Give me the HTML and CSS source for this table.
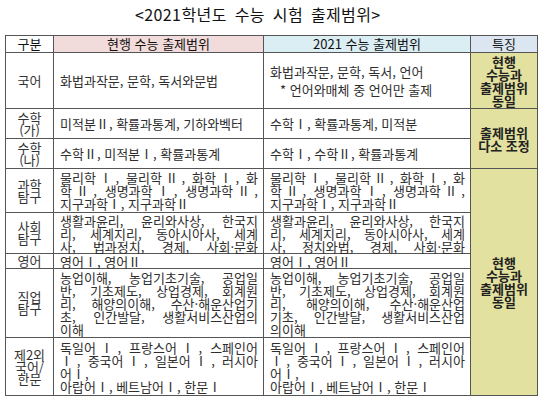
FILE: index.html
```html
<!DOCTYPE html>
<html lang="ko">
<head>
<meta charset="utf-8">
<link rel="stylesheet" href="styles.css">
</head>
<body>
<div class="title">&lt;2021학년도 수능 시험 출제범위&gt;</div>
<table class="grid">
  <colgroup>
    <col class="c1"><col class="c2"><col class="c3"><col class="c4">
  </colgroup>
  <tr class="r-head">
    <th class="h-gubun">구분</th>
    <th class="h-cur">현행 수능 출제범위</th>
    <th class="h-new">2021 수능 출제범위</th>
    <th class="h-feat">특징</th>
  </tr>
  <tr class="r-kor">
    <td class="lbl">국어</td>
    <td class="txt">화법과작문, 문학, 독서와문법</td>
    <td class="txt"><span class="ln">화법과작문, 문학, 독서, 언어</span><span class="ln note">* 언어와매체 중 언어만 출제</span></td>
    <td class="feat">현행<br>수능과<br>출제범위<br>동일</td>
  </tr>
  <tr class="r-m1">
    <td class="lbl">수학<br>(가)</td>
    <td class="txt">미적분Ⅱ, 확률과통계, 기하와벡터</td>
    <td class="txt">수학Ⅰ, 확률과통계, 미적분</td>
    <td class="feat" rowspan="2">출제범위<br>다소 조정</td>
  </tr>
  <tr class="r-m2">
    <td class="lbl">수학<br>(나)</td>
    <td class="txt">수학Ⅱ, 미적분Ⅰ, 확률과통계</td>
    <td class="txt">수학Ⅰ, 수학Ⅱ, 확률과통계</td>
  </tr>
  <tr class="r-sci">
    <td class="lbl">과학<br>탐구</td>
    <td class="txt"><span class="ln j">물리학Ⅰ, 물리학Ⅱ, 화학Ⅰ, 화</span><span class="ln j">학Ⅱ, 생명과학Ⅰ, 생명과학Ⅱ,</span><span class="ln">지구과학Ⅰ, 지구과학Ⅱ</span></td>
    <td class="txt"><span class="ln j">물리학Ⅰ, 물리학Ⅱ, 화학Ⅰ, 화</span><span class="ln j">학Ⅱ, 생명과학Ⅰ, 생명과학Ⅱ,</span><span class="ln">지구과학Ⅰ, 지구과학Ⅱ</span></td>
    <td class="feat" rowspan="5">현행<br>수능과<br>출제범위<br>동일</td>
  </tr>
  <tr class="r-soc">
    <td class="lbl">사회<br>탐구</td>
    <td class="txt"><span class="ln j">생활과윤리, 윤리와사상, 한국지</span><span class="ln j">리, 세계지리, 동아시아사, 세계</span><span class="ln j">사, 법과정치, 경제, 사회·문화</span></td>
    <td class="txt"><span class="ln j">생활과윤리, 윤리와사상, 한국지</span><span class="ln j">리, 세계지리, 동아시아사, 세계</span><span class="ln j">사, 정치와법, 경제, 사회·문화</span></td>
  </tr>
  <tr class="r-eng">
    <td class="lbl">영어</td>
    <td class="txt">영어Ⅰ, 영어Ⅱ</td>
    <td class="txt">영어Ⅰ, 영어Ⅱ</td>
  </tr>
  <tr class="r-job">
    <td class="lbl">직업<br>탐구</td>
    <td class="txt"><span class="ln j">농업이해, 농업기초기술, 공업일</span><span class="ln j">반, 기초제도, 상업경제, 회계원</span><span class="ln j">리, 해양의이해, 수산·해운산업기</span><span class="ln j">초, 인간발달, 생활서비스산업의</span><span class="ln">이해</span></td>
    <td class="txt"><span class="ln j">농업이해, 농업기초기술, 공업일</span><span class="ln j">반, 기초제도, 상업경제, 회계원</span><span class="ln j">리, 해양의이해, 수산·해운산업</span><span class="ln j">기초, 인간발달, 생활서비스산업</span><span class="ln">의이해</span></td>
  </tr>
  <tr class="r-lang">
    <td class="lbl">제2외<br>국어/<br>한문</td>
    <td class="txt"><span class="ln j">독일어Ⅰ, 프랑스어Ⅰ, 스페인어</span><span class="ln j">Ⅰ, 중국어Ⅰ, 일본어Ⅰ, 러시아</span><span class="ln">어Ⅰ,</span><span class="ln">아랍어Ⅰ, 베트남어Ⅰ, 한문Ⅰ</span></td>
    <td class="txt"><span class="ln j">독일어Ⅰ, 프랑스어Ⅰ, 스페인어</span><span class="ln j">Ⅰ, 중국어Ⅰ, 일본어Ⅰ, 러시아</span><span class="ln">어Ⅰ,</span><span class="ln">아랍어Ⅰ, 베트남어Ⅰ, 한문Ⅰ</span></td>
  </tr>
</table>
</body>
</html>
```

FILE: styles.css
```css
html, body {
  margin: 0;
  padding: 0;
  background: #ffffff;
}

body {
  font-family: "Noto Sans CJK KR", "Noto Sans", sans-serif;
  color: #222222;
  width: 550px;
  height: 405px;
  overflow: hidden;
}

.title {
  height: 35px;
  box-sizing: border-box;
  padding: 4px 0 0 135px;
  font-size: 16px;
  line-height: 20px;
  color: #111111;
  letter-spacing: 0.4px;
  word-spacing: 3px;
}

.grid {
  margin-left: 5px;
  width: 532px;
  table-layout: fixed;
  border-collapse: collapse;
  font-size: 13px;
  line-height: 13px;
}

.c1 { width: 48px; }
.c2 { width: 210px; }
.c3 { width: 207px; }
.c4 { width: 67px; }

.grid th,
.grid td {
  border: 1px solid #555555;
  padding: 0;
}

.grid th {
  font-weight: normal;
  font-size: 13px;
  line-height: 14px;
  text-align: center;
  vertical-align: middle;
  color: #111111;
}

.h-gubun { background: #ffffff; font-weight: bold; }
.h-cur { background: #f2dcdb; }
.h-new { background: #dbeef4; }
.h-feat { background: #dce6f0; }

.r-head { height: 17px; }
.r-kor { height: 56px; }
.r-m1 { height: 30px; }
.r-m2 { height: 30px; }
.r-sci { height: 44px; }
.r-soc { height: 41px; }
.r-eng { height: 15px; }
.r-job { height: 69px; }
.r-lang { height: 58px; }

.lbl {
  text-align: center;
  vertical-align: middle;
  color: #333333;
  font-size: 13px;
  line-height: 12px;
}

.txt {
  padding: 0 5px 0 6px !important;
  vertical-align: middle;
  color: #2e2e2e;
  text-align: left;
  white-space: nowrap;
}

.ln {
  display: block;
  height: 13px;
}

.ln.j {
  text-align: justify;
  text-align-last: justify;
}

.note {
  margin-top: 5px;
  padding-left: 10px;
}

.feat {
  background: #e3e19f;
  text-align: center;
  vertical-align: middle;
  font-weight: bold;
  font-size: 13px;
  line-height: 13px;
  color: #222222;
}
```
